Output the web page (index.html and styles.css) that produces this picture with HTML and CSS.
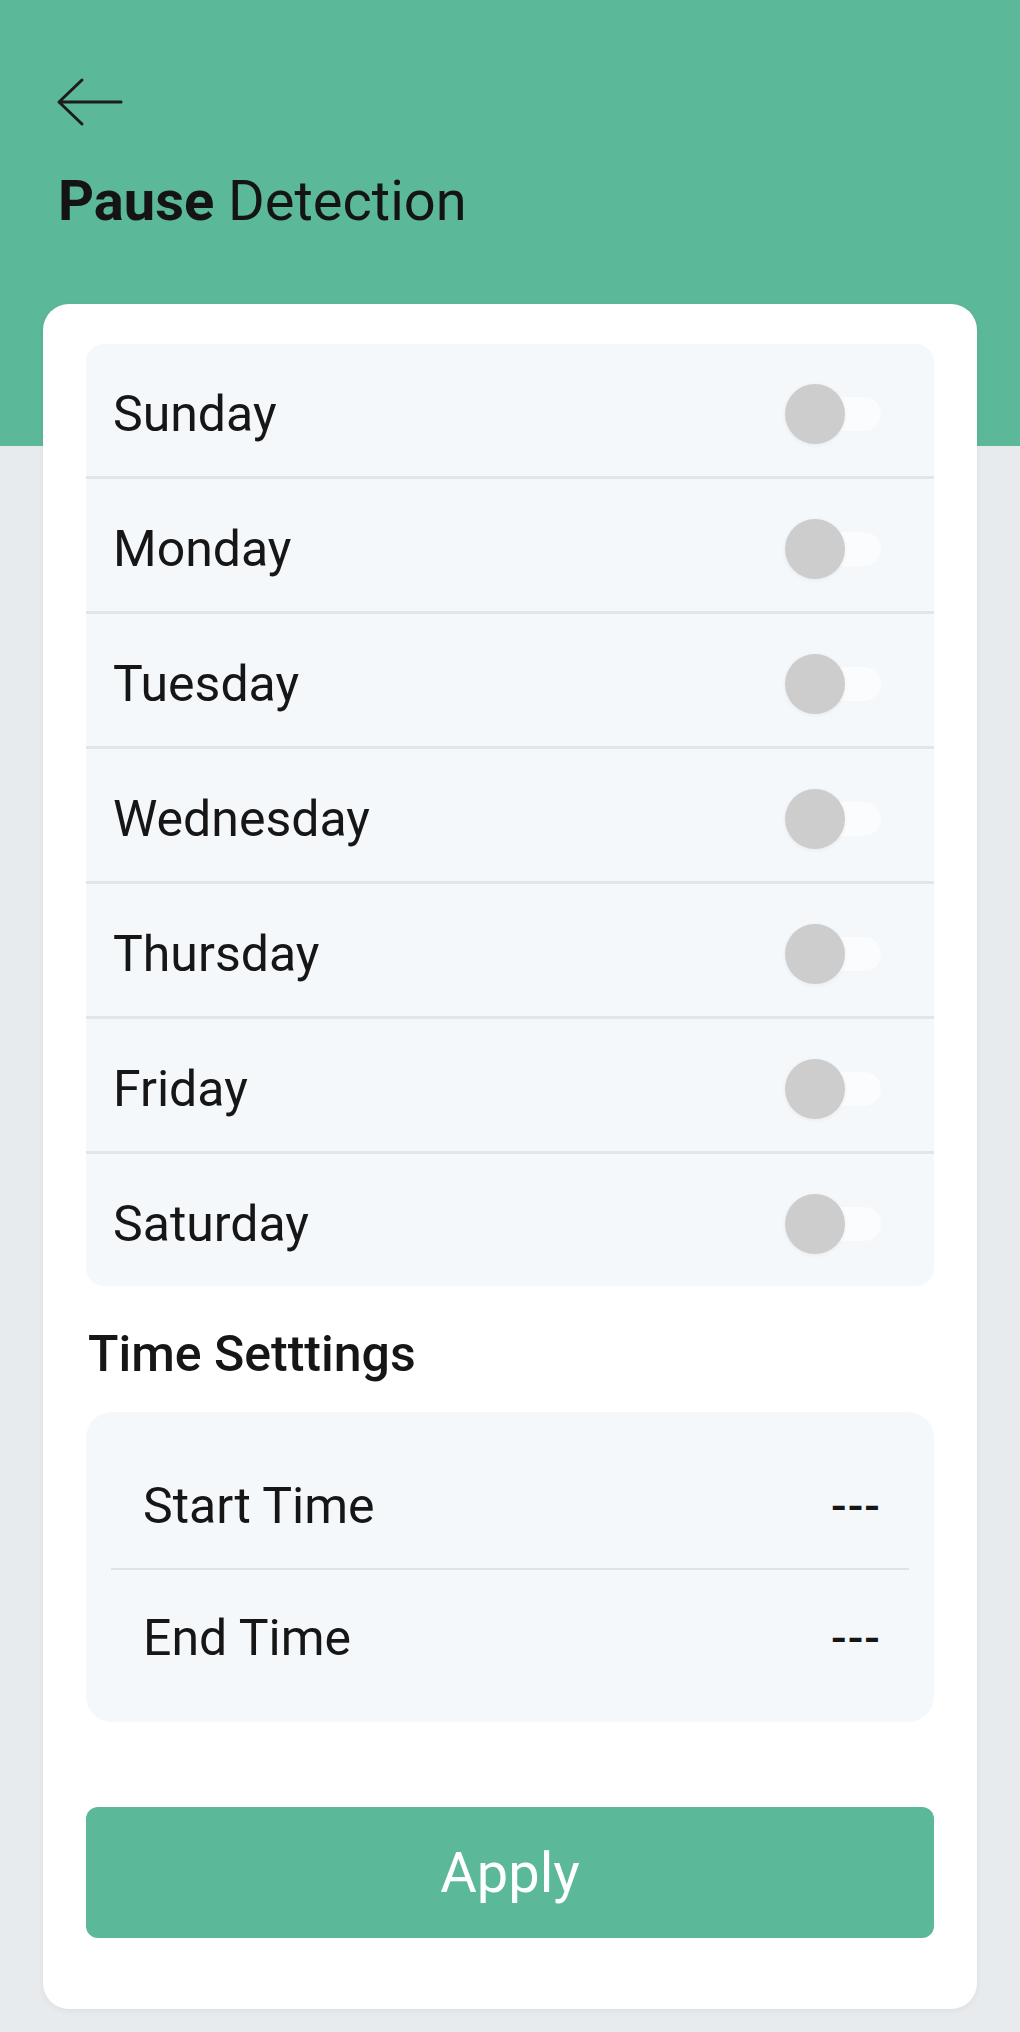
FILE: index.html
```html
<!DOCTYPE html>
<html lang="en">

<head>
    <meta charset="UTF-8">
    <meta name="viewport" content="width=device-width, initial-scale=1.0">
    <title>Pause Detection</title>
    <link rel="stylesheet" href="styles.css">
</head>

<body>
    <div class="page">
        <div class="header">
            <div class="back-btn">
                <svg width="68" height="50" viewBox="0 0 68 50">
                    <path d="M66 25 H4 M27 3 L4 25 L27 47" fill="none" stroke="#1c1c1c" stroke-width="3" stroke-linecap="round" stroke-linejoin="round" />
                </svg>
            </div>
            <h1 class="title"><b>Pause</b> Detection</h1>
        </div>

        <div class="card">
            <div class="day-list">
                <div class="day-row"><span class="day-name">Sunday</span><span class="toggle"><span class="knob"></span></span></div>
                <div class="day-row"><span class="day-name">Monday</span><span class="toggle"><span class="knob"></span></span></div>
                <div class="day-row"><span class="day-name">Tuesday</span><span class="toggle"><span class="knob"></span></span></div>
                <div class="day-row"><span class="day-name">Wednesday</span><span class="toggle"><span class="knob"></span></span></div>
                <div class="day-row"><span class="day-name">Thursday</span><span class="toggle"><span class="knob"></span></span></div>
                <div class="day-row"><span class="day-name">Friday</span><span class="toggle"><span class="knob"></span></span></div>
                <div class="day-row"><span class="day-name">Saturday</span><span class="toggle"><span class="knob"></span></span></div>
            </div>

            <div class="section-title">Time Setttings</div>

            <div class="time-box">
                <div class="time-row"><span>Start Time</span><span class="time-value">---</span></div>
                <div class="time-row"><span>End Time</span><span class="time-value">---</span></div>
            </div>

            <button class="apply-btn">Apply</button>
        </div>
    </div>
</body>

</html>
```

FILE: styles.css
```css
body {
    margin: 0;
    padding: 0;
    font-family: Roboto, "Noto Sans", Arial, sans-serif;
    color: #161616;
}

.page {
    min-height: 2032px;
    background: linear-gradient(to bottom, #5bb899 0, #5bb899 446px, #e8ebee 446px);
    padding-bottom: 21px;
    box-sizing: border-box;
}

.header {
    padding: 77px 55px 0 55px;
}

.back-btn {
    width: 68px;
    height: 50px;
}

.back-btn svg {
    display: block;
}

.title {
    margin: 42px 0 0 3px;
    font-size: 56px;
    line-height: 64px;
    font-weight: 400;
    color: #141414;
}

.title b {
    font-weight: 700;
}

.card {
    margin: 71px 43px 0 43px;
    padding: 40px 43px 71px 43px;
    background-color: #fff;
    border-radius: 26px;
    box-shadow: 0 2px 6px rgba(0, 0, 0, 0.05);
}

.day-list {
    background-color: #f5f8fb;
    border-radius: 18px;
    overflow: hidden;
}

.day-row {
    display: flex;
    justify-content: space-between;
    align-items: center;
    box-sizing: border-box;
    height: 135px;
    padding: 8px 53px 0 27px;
    border-bottom: 3px solid #e2e5e9;
}

.day-row:last-child {
    height: 132px;
    border-bottom: none;
}

.day-name {
    font-size: 50px;
}

.toggle {
    position: relative;
    width: 94px;
    height: 34px;
    border-radius: 17px;
    background-color: rgba(255, 255, 255, 0.55);
}

.knob {
    position: absolute;
    left: -2px;
    top: -13px;
    width: 60px;
    height: 60px;
    border-radius: 50%;
    background-color: #cdcdcd;
    box-shadow: 0 1px 4px rgba(0, 0, 0, 0.06);
}

.section-title {
    margin: 38px 0 0 2px;
    font-size: 50px;
    line-height: 60px;
    font-weight: 500;
}

.time-box {
    margin-top: 28px;
    padding: 32px 25px 22px 25px;
    background-color: #f5f8fb;
    border-radius: 26px;
}

.time-row {
    display: flex;
    justify-content: space-between;
    align-items: center;
    height: 124px;
    padding: 0 28px 0 32px;
    font-size: 50px;
}

.time-row:first-child {
    border-bottom: 2px solid #dfe3e6;
}

.time-row + .time-row {
    margin-top: 6px;
}

.time-value {
    font-size: 46px;
    font-weight: 500;
    letter-spacing: 1px;
}

.apply-btn {
    display: block;
    width: 100%;
    height: 131px;
    margin-top: 85px;
    border: none;
    border-radius: 12px;
    background-color: #5bb899;
    color: #fff;
    font-family: Roboto, "Noto Sans", Arial, sans-serif;
    font-size: 56px;
}
```
